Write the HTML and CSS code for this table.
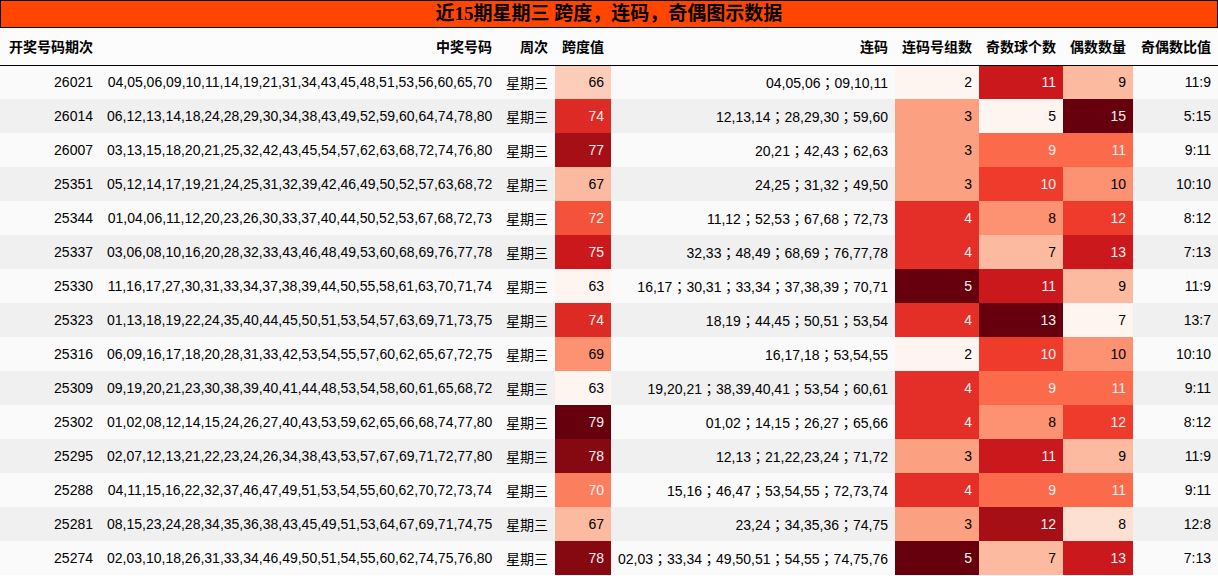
FILE: index.html
```html
<!DOCTYPE html>
<html lang="zh">
<head>
<meta charset="utf-8">
<title>近15期星期三 跨度，连码，奇偶图示数据</title>
<link rel="stylesheet" href="styles.css">
</head>
<body>
<div class="title">近15期星期三 跨度，连码，奇偶图示数据</div>
<table class="grid">
<colgroup>
<col class="w1"><col class="w2"><col class="w3"><col class="w4"><col class="w5"><col class="w6"><col class="w7"><col class="w8"><col class="w9">
</colgroup>
<thead>
<tr><th>开奖号码期次</th><th>中奖号码</th><th>周次</th><th>跨度值</th><th>连码</th><th>连码号组数</th><th>奇数球个数</th><th>偶数数量</th><th>奇偶数比值</th></tr>
</thead>
<tbody>
<tr><td>26021</td><td>04,05,06,09,10,11,14,19,21,31,34,43,45,48,51,53,56,60,65,70</td><td>星期三</td><td class="c0188">66</td><td>04,05,06；09,10,11</td><td class="c00">2</td><td class="c75">11</td><td class="c25">9</td><td>11:9</td></tr>
<tr><td>26014</td><td>06,12,13,14,18,24,28,29,30,34,38,43,49,52,59,60,64,74,78,80</td><td>星期三</td><td class="c6875">74</td><td>12,13,14；28,29,30；59,60</td><td class="c333">3</td><td class="c00">5</td><td class="c100">15</td><td>5:15</td></tr>
<tr><td>26007</td><td>03,13,15,18,20,21,25,32,42,43,45,54,57,62,63,68,72,74,76,80</td><td>星期三</td><td class="c875">77</td><td>20,21；42,43；62,63</td><td class="c333">3</td><td class="c50">9</td><td class="c50">11</td><td>9:11</td></tr>
<tr><td>25351</td><td>05,12,14,17,19,21,24,25,31,32,39,42,46,49,50,52,57,63,68,72</td><td>星期三</td><td class="c25">67</td><td>24,25；31,32；49,50</td><td class="c333">3</td><td class="c625">10</td><td class="c375">10</td><td>10:10</td></tr>
<tr><td>25344</td><td>01,04,06,11,12,20,23,26,30,33,37,40,44,50,52,53,67,68,72,73</td><td>星期三</td><td class="c5625">72</td><td>11,12；52,53；67,68；72,73</td><td class="c667">4</td><td class="c375">8</td><td class="c625">12</td><td>8:12</td></tr>
<tr><td>25337</td><td>03,06,08,10,16,20,28,32,33,43,46,48,49,53,60,68,69,76,77,78</td><td>星期三</td><td class="c75">75</td><td>32,33；48,49；68,69；76,77,78</td><td class="c667">4</td><td class="c25">7</td><td class="c75">13</td><td>7:13</td></tr>
<tr><td>25330</td><td>11,16,17,27,30,31,33,34,37,38,39,44,50,55,58,61,63,70,71,74</td><td>星期三</td><td class="c00">63</td><td>16,17；30,31；33,34；37,38,39；70,71</td><td class="c100">5</td><td class="c75">11</td><td class="c25">9</td><td>11:9</td></tr>
<tr><td>25323</td><td>01,13,18,19,22,24,35,40,44,45,50,51,53,54,57,63,69,71,73,75</td><td>星期三</td><td class="c6875">74</td><td>18,19；44,45；50,51；53,54</td><td class="c667">4</td><td class="c100">13</td><td class="c00">7</td><td>13:7</td></tr>
<tr><td>25316</td><td>06,09,16,17,18,20,28,31,33,42,53,54,55,57,60,62,65,67,72,75</td><td>星期三</td><td class="c375">69</td><td>16,17,18；53,54,55</td><td class="c00">2</td><td class="c625">10</td><td class="c375">10</td><td>10:10</td></tr>
<tr><td>25309</td><td>09,19,20,21,23,30,38,39,40,41,44,48,53,54,58,60,61,65,68,72</td><td>星期三</td><td class="c00">63</td><td>19,20,21；38,39,40,41；53,54；60,61</td><td class="c667">4</td><td class="c50">9</td><td class="c50">11</td><td>9:11</td></tr>
<tr><td>25302</td><td>01,02,08,12,14,15,24,26,27,40,43,53,59,62,65,66,68,74,77,80</td><td>星期三</td><td class="c100">79</td><td>01,02；14,15；26,27；65,66</td><td class="c667">4</td><td class="c375">8</td><td class="c625">12</td><td>8:12</td></tr>
<tr><td>25295</td><td>02,07,12,13,21,22,23,24,26,34,38,43,53,57,67,69,71,72,77,80</td><td>星期三</td><td class="c9375">78</td><td>12,13；21,22,23,24；71,72</td><td class="c333">3</td><td class="c75">11</td><td class="c25">9</td><td>11:9</td></tr>
<tr><td>25288</td><td>04,11,15,16,22,32,37,46,47,49,51,53,54,55,60,62,70,72,73,74</td><td>星期三</td><td class="c4375">70</td><td>15,16；46,47；53,54,55；72,73,74</td><td class="c667">4</td><td class="c50">9</td><td class="c50">11</td><td>9:11</td></tr>
<tr><td>25281</td><td>08,15,23,24,28,34,35,36,38,43,45,49,51,53,64,67,69,71,74,75</td><td>星期三</td><td class="c25">67</td><td>23,24；34,35,36；74,75</td><td class="c333">3</td><td class="c875">12</td><td class="c125">8</td><td>12:8</td></tr>
<tr><td>25274</td><td>02,03,10,18,26,31,33,34,46,49,50,51,54,55,60,62,74,75,76,80</td><td>星期三</td><td class="c9375">78</td><td>02,03；33,34；49,50,51；54,55；74,75,76</td><td class="c100">5</td><td class="c25">7</td><td class="c75">13</td><td>7:13</td></tr>
</tbody>
</table>
</body>
</html>
```

FILE: styles.css
```css
html, body {
  margin: 0;
  padding: 0;
  background: #ffffff;
}
body {
  width: 1218px;
  font-family: "Liberation Sans", "Noto Sans CJK SC", sans-serif;
  color: #000;
}
.title {
  box-sizing: border-box;
  height: 28px;
  background: #ff4500;
  border: 1px solid #000;
  text-align: center;
  font-family: "Liberation Serif", "Noto Sans CJK SC", serif;
  font-weight: bold;
  font-size: 19px;
  line-height: 26px;
  color: #000;
}
.grid {
  width: 1218px;
  table-layout: fixed;
  border-collapse: collapse;
  border-spacing: 0;
  font-size: 14px;
}
.w1 { width: 100px; }
.w2 { width: 399px; }
.w3 { width: 56px; }
.w4 { width: 56px; }
.w5 { width: 284px; }
.w6 { width: 84px; }
.w7 { width: 84px; }
.w8 { width: 70px; }
.w9 { width: 85px; }
.grid th {
  height: 37px;
  padding: 0 7px;
  text-align: right;
  font-weight: bold;
  background: #fcfcfc;
  border-bottom: 1px solid #000;
  white-space: nowrap;
  box-sizing: border-box;
}
.grid td {
  height: 34px;
  padding: 0 7px;
  text-align: right;
  white-space: nowrap;
  box-sizing: border-box;
}
.grid td:nth-child(5) {
  font-family: "Liberation Sans", "Noto Sans CJK TC", sans-serif;
}
.grid tbody tr:nth-child(odd) { background: #fafafa; }
.grid tbody tr:nth-child(even) { background: #f0f0f0; }

.c00 { background: #fff5f0; color: #000; }
.c0188 { background: #fdcdb9; color: #000; }
.c125 { background: #fee0d2; color: #000; }
.c25 { background: #fcbba1; color: #000; }
.c333 { background: #fca082; color: #000; }
.c375 { background: #fc9272; color: #000; }
.c4375 { background: #fb7e5e; color: #f1f1f1; }
.c50 { background: #fb6a4a; color: #f1f1f1; }
.c5625 { background: #f5523b; color: #f1f1f1; }
.c625 { background: #ef3b2c; color: #f1f1f1; }
.c667 { background: #e32f27; color: #f1f1f1; }
.c6875 { background: #dd2a25; color: #f1f1f1; }
.c75 { background: #cb181d; color: #f1f1f1; }
.c875 { background: #a50f15; color: #f1f1f1; }
.c9375 { background: #860811; color: #f1f1f1; }
.c100 { background: #67000d; color: #f1f1f1; }
```
